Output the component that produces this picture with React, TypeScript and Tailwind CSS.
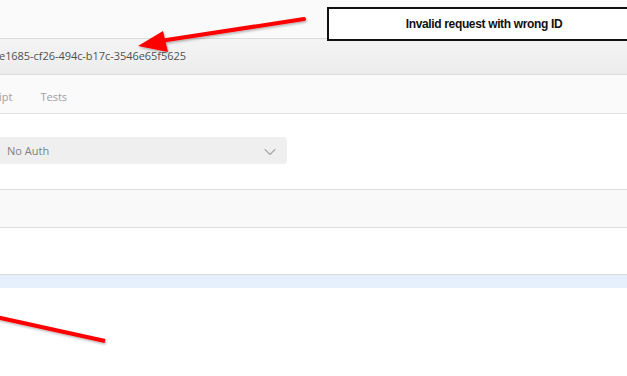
import { ChevronDown } from "lucide-react";

const App = () => {
  return (
    <div className="relative w-[627px] h-[376px] overflow-hidden bg-white font-['Open_Sans',sans-serif]">
      {/* top strip */}
      <div className="h-[38px] bg-[#fafafa]" />

      {/* url bar */}
      <div className="h-[37px] flex items-center border-y border-[#dcdcdc] bg-gradient-to-b from-[#f4f4f4] to-[#ececec]">
        <span className="text-[11px] text-[#505050] -ml-[1px] tracking-[-0.05px]">
          e1685-cf26-494c-b17c-3546e65f5625
        </span>
      </div>

      {/* tabs */}
      <div className="h-[39px] flex items-center gap-[28px] pt-[7px] bg-[#fafafa] border-b border-[#e2e2e2] text-[11px] text-[#a0a0a0]">
        <span className="-ml-[1px]">ipt</span>
        <span>Tests</span>
      </div>

      {/* auth select */}
      <div className="h-[75px] pt-[23px]">
        <div className="w-[287px] h-[27px] flex items-center justify-between bg-[#efefef] rounded-r-[3px] pl-[7px] pr-[7px] pt-[2px]">
          <span className="text-[11px] text-[#808080]">No Auth</span>
          <ChevronDown className="w-[20px] h-[20px] text-[#a8a8a8]" strokeWidth={1.3} />
        </div>
      </div>

      {/* gray bar */}
      <div className="h-[39px] bg-[#f9f9f9] border-y border-[#dedede]" />

      {/* empty */}
      <div className="h-[46px]" />

      {/* blue bar */}
      <div className="h-[14px] bg-[#e5f0fc] border-t border-[#dcdcdc]" />

      {/* callout */}
      <div className="absolute left-[327px] top-[7px] w-[302px] h-[34px] border-2 border-[#111] bg-white flex items-center justify-center">
        <span className="font-['Liberation_Sans',Arial,sans-serif] font-bold text-[12px] text-[#111] tracking-[-0.35px] pl-[12px]">
          Invalid request with wrong ID
        </span>
      </div>

      {/* red annotation arrows */}
      <svg className="absolute left-0 top-0" width="627" height="376" viewBox="0 0 627 376">
        <defs>
          <filter id="sh" x="-10%" y="-50%" width="120%" height="200%">
            <feDropShadow dx="1" dy="1.5" stdDeviation="1" floodColor="#000" floodOpacity="0.3" />
          </filter>
        </defs>
        <g filter="url(#sh)">
          <line x1="304" y1="19" x2="160" y2="41" stroke="#f00" strokeWidth="4" strokeLinecap="round" />
          <polygon points="138,46 163,31 168,52" fill="#f00" />
          <line x1="-4" y1="317" x2="105" y2="341" stroke="#f00" strokeWidth="4" strokeLinecap="butt" />
        </g>
      </svg>
    </div>
  );
};

export default App;
